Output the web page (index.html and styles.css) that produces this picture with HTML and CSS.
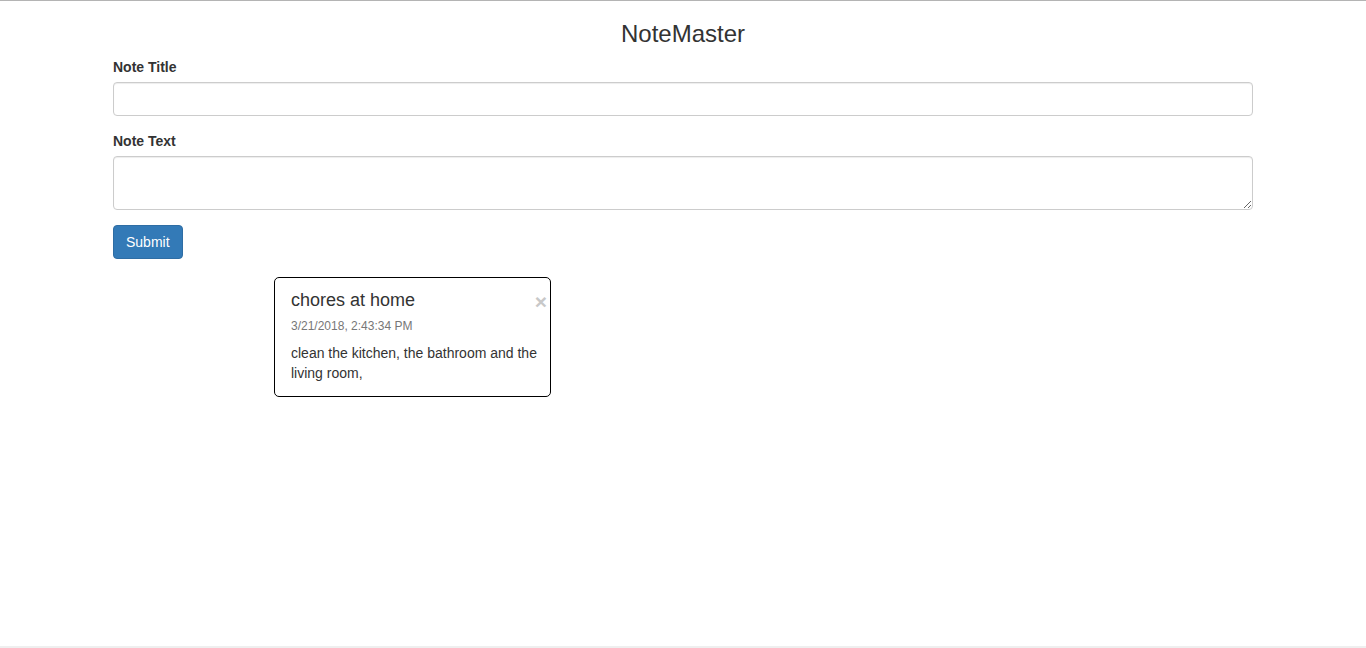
FILE: index.html
```html
<!DOCTYPE html>
<html lang="en">
<head>
<meta charset="utf-8">
<title>NoteMaster</title>
<link rel="stylesheet" href="styles.css">
</head>
<body>
<div class="page">
  <div class="container">
    <h3 class="app-title">NoteMaster</h3>
    <form class="note-form">
      <div class="form-group">
        <label class="label" for="title">Note Title</label>
        <input class="form-control" id="title" type="text">
      </div>
      <div class="form-group">
        <label class="label" for="text">Note Text</label>
        <textarea class="form-control textarea" id="text" rows="2"></textarea>
      </div>
      <button class="btn-primary" type="button">Submit</button>
    </form>
    <div class="notes">
      <div class="note-card">
        <div class="note-head">
          <h4 class="note-title">chores at home</h4>
          <span class="close">&times;</span>
        </div>
        <div class="note-date">3/21/2018, 2:43:34 PM</div>
        <p class="note-body">clean the kitchen, the bathroom and the living room,</p>
      </div>
    </div>
  </div>
  <div class="footer"></div>
</div>
</body>
</html>
```

FILE: styles.css
```css
* { box-sizing: border-box; }
html, body { margin: 0; padding: 0; }
body {
  font-family: "Liberation Sans", Arial, Helvetica, sans-serif;
  font-size: 14px;
  line-height: 20px;
  color: #333;
  background: #fff;
  border-top: 1px solid #b4b4b4;
}
.page {
  min-height: calc(100vh - 1px);
  display: flex;
  flex-direction: column;
}
.container {
  width: 1170px;
  margin: 0 auto;
  padding: 0 15px;
  flex: 1;
}
.app-title {
  font-size: 24px;
  font-weight: 500;
  line-height: 1.1;
  text-align: center;
  margin: 20px 0 10px;
}
.form-group { margin-bottom: 15px; }
.label {
  display: inline-block;
  font-weight: bold;
  margin-bottom: 5px;
}
.form-control {
  display: block;
  width: 100%;
  height: 34px;
  padding: 6px 12px;
  font-family: inherit;
  font-size: 14px;
  line-height: 20px;
  color: #555;
  background: #fff;
  border: 1px solid #ccc;
  border-radius: 4px;
  box-shadow: inset 0 1px 1px rgba(0,0,0,.075);
  margin: 0;
}
.textarea {
  height: 54px;
  resize: vertical;
}
.btn-primary {
  display: inline-block;
  height: 34px;
  padding: 6px 12px;
  font-family: inherit;
  font-size: 14px;
  line-height: 20px;
  color: #fff;
  background: #337ab7;
  border: 1px solid #2e6da4;
  border-radius: 4px;
  margin: 0;
  vertical-align: top;
}
.notes {
  display: flex;
  padding-left: 161px;
  margin-top: 18px;
}
.note-card {
  width: 277px;
  border: 1px solid #000;
  border-radius: 5px;
  padding: 13px 3px 13px 16px;
}
.note-head {
  display: flex;
  justify-content: space-between;
  align-items: flex-start;
}
.note-title {
  font-size: 18px;
  font-weight: 500;
  line-height: 1.1;
  margin: 0 0 5px;
}
.close {
  font-size: 21px;
  font-weight: bold;
  line-height: 1;
  color: #c8c8c8;
  margin-top: 0;
}
.note-date {
  font-size: 12px;
  color: #777;
  margin-bottom: 7px;
}
.note-body {
  margin: 0 9px 0 0;
}
.footer {
  height: 2px;
  background: #efefef;
}
```
